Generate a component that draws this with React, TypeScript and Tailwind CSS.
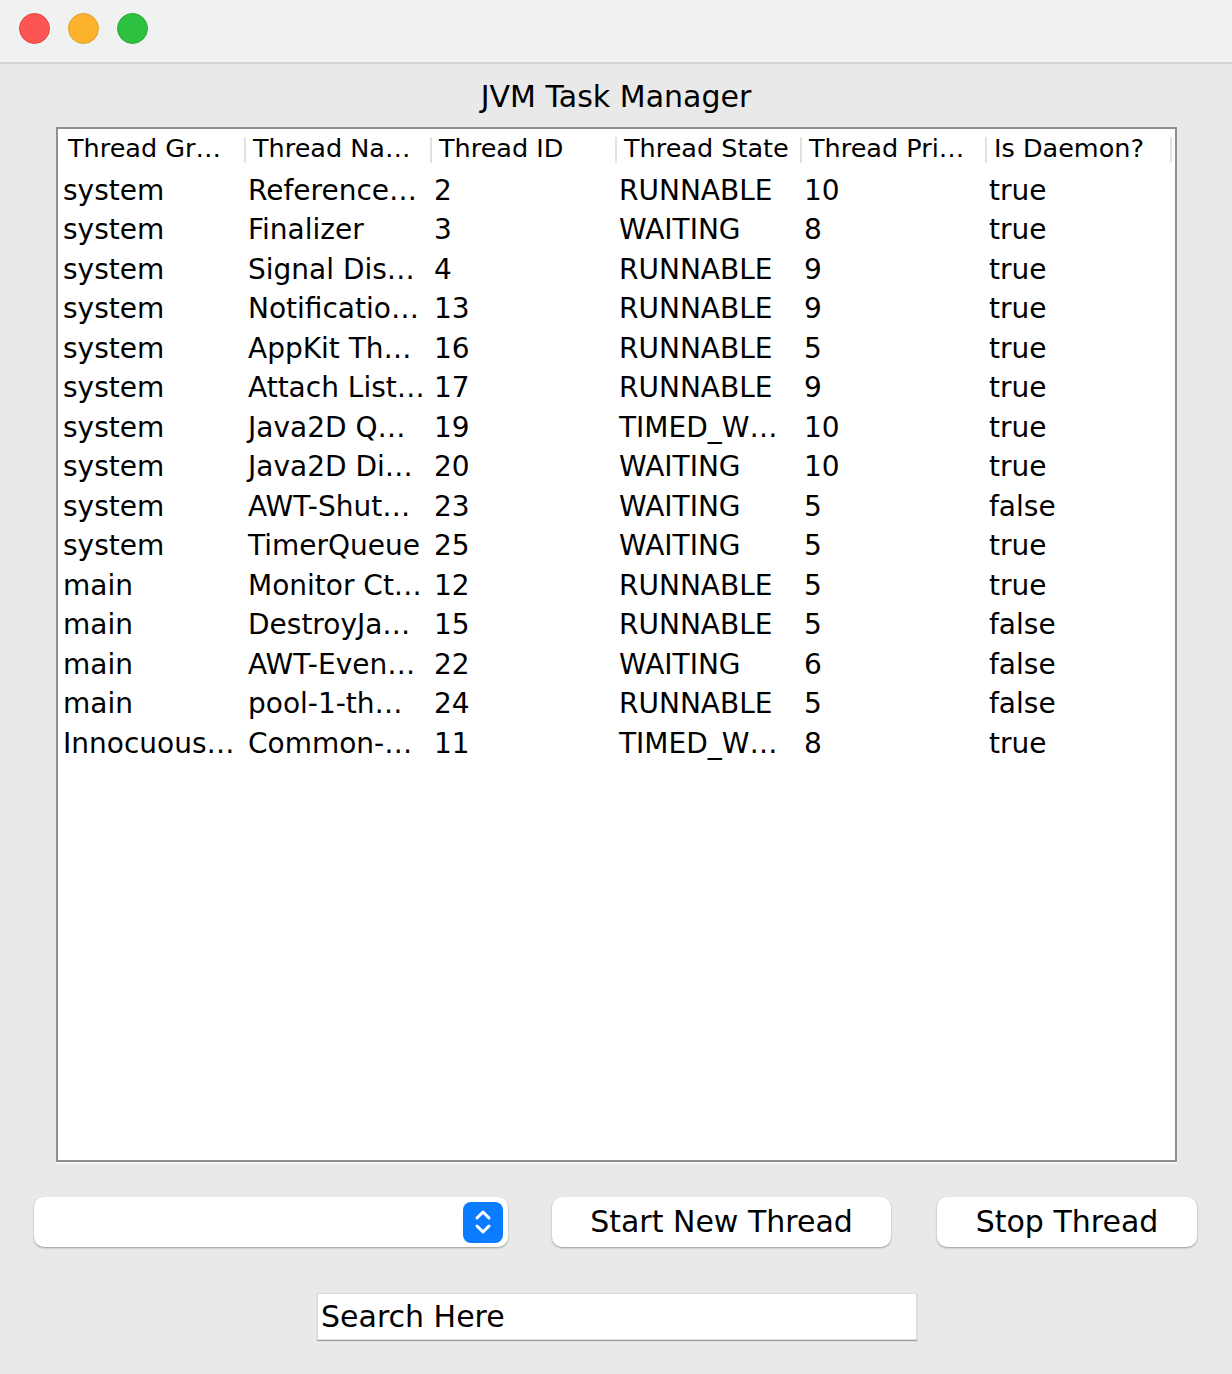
import React from 'react';

const FONT = { fontFamily: '"DejaVu Sans", "Lucida Grande", sans-serif' };

const headers = ['Thread Gr…', 'Thread Na…', 'Thread ID', 'Thread State', 'Thread Pri…', 'Is Daemon?'];

const rows: string[][] = [
  ['system', 'Reference…', '2', 'RUNNABLE', '10', 'true'],
  ['system', 'Finalizer', '3', 'WAITING', '8', 'true'],
  ['system', 'Signal Dis…', '4', 'RUNNABLE', '9', 'true'],
  ['system', 'Notificatio…', '13', 'RUNNABLE', '9', 'true'],
  ['system', 'AppKit Th…', '16', 'RUNNABLE', '5', 'true'],
  ['system', 'Attach List…', '17', 'RUNNABLE', '9', 'true'],
  ['system', 'Java2D Q…', '19', 'TIMED_W…', '10', 'true'],
  ['system', 'Java2D Di…', '20', 'WAITING', '10', 'true'],
  ['system', 'AWT-Shut…', '23', 'WAITING', '5', 'false'],
  ['system', 'TimerQueue', '25', 'WAITING', '5', 'true'],
  ['main', 'Monitor Ct…', '12', 'RUNNABLE', '5', 'true'],
  ['main', 'DestroyJa…', '15', 'RUNNABLE', '5', 'false'],
  ['main', 'AWT-Even…', '22', 'WAITING', '6', 'false'],
  ['main', 'pool-1-th…', '24', 'RUNNABLE', '5', 'false'],
  ['Innocuous…', 'Common-…', '11', 'TIMED_W…', '8', 'true'],
];

const cols = 'grid grid-cols-[186px_186px_185px_185px_185px_185px]';

export default function App() {
  return (
    <div className="w-[1232px] h-[1374px] bg-[#e9e9e9] flex flex-col text-black" style={FONT}>
      {/* title bar */}
      <div className="h-[64px] bg-[#f0f1f1] border-b-2 border-[#d3d3d3] flex items-start pt-[13px] gap-[18px] pl-[19px] shrink-0">
        <span className="w-[31px] h-[31px] rounded-full bg-[#fd5454] border border-[#e4453f]" />
        <span className="w-[31px] h-[31px] rounded-full bg-[#fdb22e] border border-[#e29f25]" />
        <span className="w-[31px] h-[31px] rounded-full bg-[#2ec03f] border border-[#27a835]" />
      </div>

      <div className="h-[63px] flex items-center justify-center text-[30px] leading-none pt-[3px]">JVM Task Manager</div>

      {/* table */}
      <div className="ml-[56px] w-[1121px] h-[1035px] bg-white border-2 border-[#8f8f8f] shadow-[0_2px_0_#f7f7f7] overflow-hidden">
        <div className={`${cols} h-[40px] items-center text-[25.5px] leading-none`}>
          {headers.map((h, i) => (
            <div key={h} className="relative h-full flex items-center pl-[9px]">
              {i > 0 && <span className="absolute left-0 top-[8px] bottom-[6px] w-[2px] bg-[#e2e2e2]" />}
              <span className={i === 0 ? 'pl-[1px]' : ''}>{h}</span>
            </div>
          ))}
        </div>
        <div className="relative">
          <span className="absolute left-[1112px] -top-[32px] w-[2px] h-[26px] bg-[#e2e2e2]" />
        </div>
        <div className="pt-[2px]">
          {rows.map((r, ri) => (
            <div key={ri} className={`${cols} h-[39.5px] items-center text-[28px] leading-none`}>
              {r.map((c, ci) => (
                <div key={ci} className={ci === 0 ? 'pl-[5px]' : 'pl-[4px]'}>{c}</div>
              ))}
            </div>
          ))}
        </div>
      </div>

      {/* controls */}
      <div className="flex items-center mt-[34px] h-[52px]">
        <div className="ml-[34px] w-[474px] h-[50px] bg-white rounded-[10px] shadow-[0_1px_2px_rgba(0,0,0,0.35)] flex items-center justify-end pr-[5px]">
          <div className="w-[40px] h-[41px] rounded-[8px] bg-[#0b7bff] flex items-center justify-center">
            <svg width="20" height="30" viewBox="0 0 20 30" fill="none" stroke="white" strokeWidth="3" strokeLinecap="round" strokeLinejoin="round">
              <path d="M4 11 L10 5 L16 11" />
              <path d="M4 19 L10 25 L16 19" />
            </svg>
          </div>
        </div>
        <button className="ml-[44px] w-[339px] h-[50px] bg-white rounded-[10px] shadow-[0_1px_2px_rgba(0,0,0,0.35)] text-[30px] leading-none">
          Start New Thread
        </button>
        <button className="ml-[46px] w-[260px] h-[50px] bg-white rounded-[10px] shadow-[0_1px_2px_rgba(0,0,0,0.35)] text-[30px] leading-none">
          Stop Thread
        </button>
      </div>

      <div className="mt-[45px] ml-[317px] w-[600px] h-[47px] bg-white shadow-[0_1px_1px_rgba(0,0,0,0.3)] border border-[#dcdcdc] flex items-center pl-[3px] text-[30px] leading-none">
        Search Here
      </div>
    </div>
  );
}
